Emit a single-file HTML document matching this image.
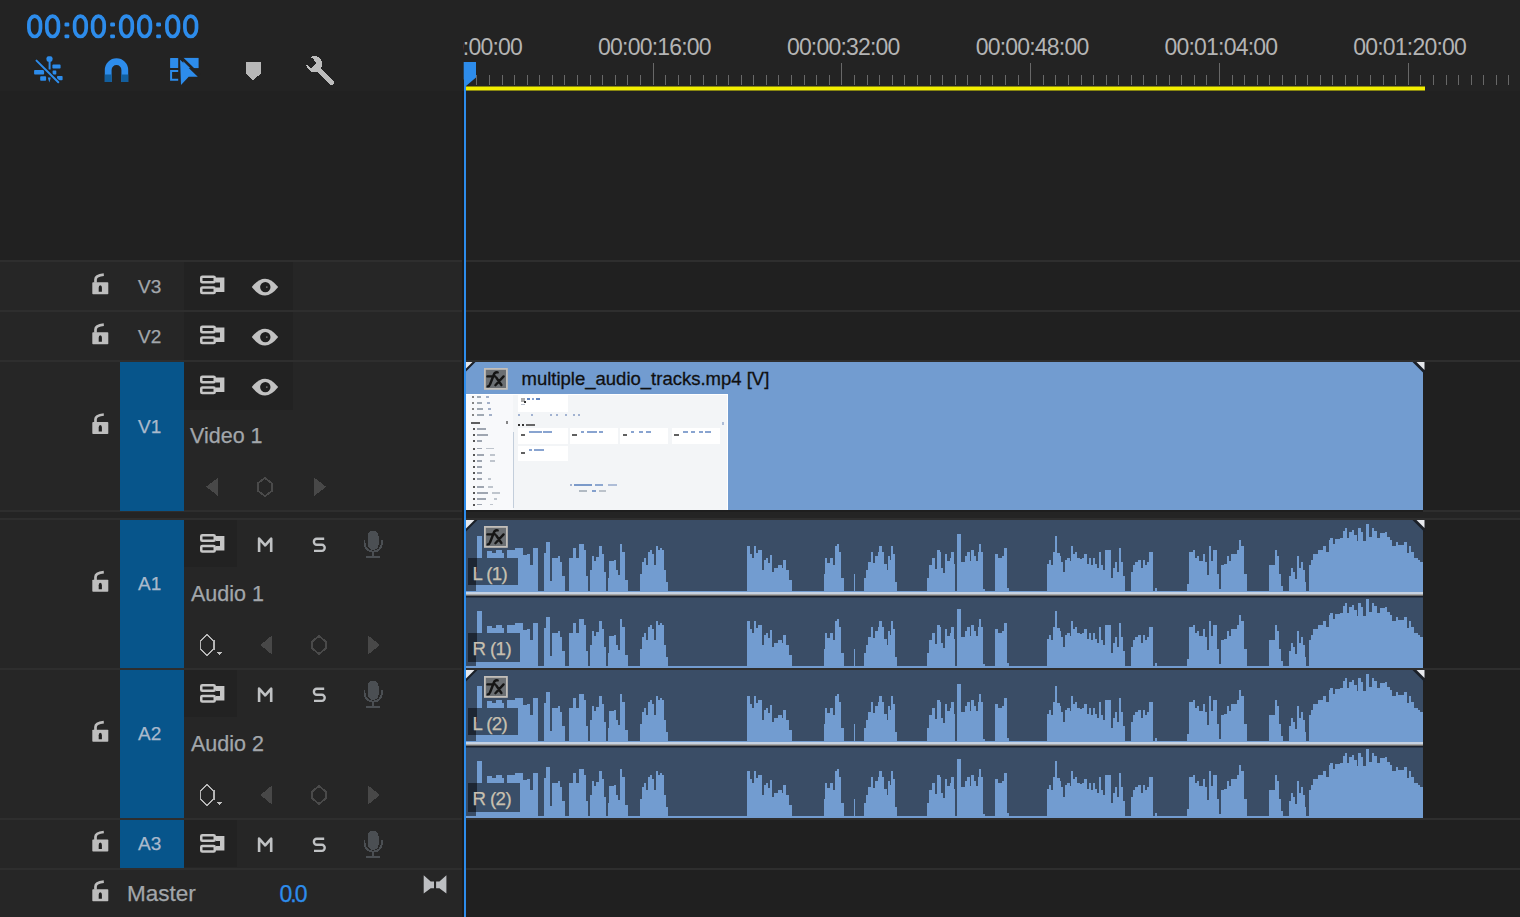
<!DOCTYPE html>
<html><head><meta charset="utf-8"><style>
html,body{margin:0;padding:0;}
body{width:1520px;height:917px;overflow:hidden;position:relative;background:#212121;font-family:"Liberation Sans", sans-serif;}
svg{position:absolute;left:0;top:0;}
</style></head><body>
<svg width="1520" height="917" viewBox="0 0 1520 917" shape-rendering="crispEdges">
<rect x="0" y="0" width="1520" height="91" fill="#232323" />
<rect x="0" y="91" width="1520" height="826" fill="#212121" />
<rect x="0" y="262" width="462" height="49" fill="#262626" />
<rect x="466" y="262" width="1054" height="49" fill="#202020" />
<rect x="0" y="312" width="462" height="49" fill="#262626" />
<rect x="466" y="312" width="1054" height="49" fill="#202020" />
<rect x="0" y="362" width="462" height="149" fill="#262626" />
<rect x="466" y="362" width="1054" height="149" fill="#202020" />
<rect x="0" y="520" width="462" height="148" fill="#262626" />
<rect x="466" y="520" width="1054" height="148" fill="#202020" />
<rect x="0" y="670" width="462" height="148" fill="#262626" />
<rect x="466" y="670" width="1054" height="148" fill="#202020" />
<rect x="0" y="820" width="462" height="48" fill="#262626" />
<rect x="466" y="820" width="1054" height="48" fill="#202020" />
<rect x="0" y="870" width="462" height="48" fill="#262626" />
<rect x="466" y="870" width="1054" height="48" fill="#202020" />
<rect x="0" y="260" width="1520" height="2" fill="#2e2e2e" />
<rect x="0" y="310" width="1520" height="2" fill="#2e2e2e" />
<rect x="0" y="360" width="1520" height="2" fill="#2e2e2e" />
<rect x="0" y="510" width="1520" height="2" fill="#2e2e2e" />
<rect x="0" y="518" width="1520" height="2" fill="#2e2e2e" />
<rect x="0" y="668" width="1520" height="2" fill="#2e2e2e" />
<rect x="0" y="818" width="1520" height="2" fill="#2e2e2e" />
<rect x="0" y="868" width="1520" height="2" fill="#2e2e2e" />
<rect x="0" y="512" width="1520" height="6" fill="#242424" />
<rect x="462" y="91" width="2" height="826" fill="#1c1c1c" />
<rect x="120" y="362" width="64" height="149" fill="#07558b" />
<rect x="120" y="520" width="64" height="148" fill="#07558b" />
<rect x="120" y="670" width="64" height="148" fill="#07558b" />
<rect x="120" y="820" width="64" height="48" fill="#07558b" />
<rect x="184" y="262" width="109" height="48" fill="#222222" />
<rect x="184" y="312" width="109" height="48" fill="#222222" />
<rect x="184" y="362" width="109" height="48" fill="#222222" />
<rect x="184" y="520" width="53" height="47" fill="#222222" />
<rect x="184" y="670" width="53" height="47" fill="#222222" />
<rect x="184" y="820" width="53" height="47" fill="#222222" />
<g fill="none" stroke="#2d8ceb" stroke-width="3.7" shape-rendering="geometricPrecision"><rect x="28.900000000000002" y="16.1" width="11.6" height="20.4" rx="5.8" ry="8.2"/><rect x="46.800000000000004" y="16.1" width="11.6" height="20.4" rx="5.8" ry="8.2"/><rect x="74.60000000000001" y="16.1" width="11.6" height="20.4" rx="5.8" ry="8.2"/><rect x="92.60000000000001" y="16.1" width="11.6" height="20.4" rx="5.8" ry="8.2"/><rect x="120.7" y="16.1" width="11.6" height="20.4" rx="5.8" ry="8.2"/><rect x="138.79999999999998" y="16.1" width="11.6" height="20.4" rx="5.8" ry="8.2"/><rect x="166.89999999999998" y="16.1" width="11.6" height="20.4" rx="5.8" ry="8.2"/><rect x="184.89999999999998" y="16.1" width="11.6" height="20.4" rx="5.8" ry="8.2"/></g><g fill="#2d8ceb" shape-rendering="geometricPrecision"><rect x="64.5" y="22.6" width="4.8" height="3.9" rx="1.2"/><rect x="64.5" y="34.4" width="4.8" height="3.9" rx="1.2"/><rect x="110.19999999999999" y="22.6" width="4.8" height="3.9" rx="1.2"/><rect x="110.19999999999999" y="34.4" width="4.8" height="3.9" rx="1.2"/><rect x="156.2" y="22.6" width="4.8" height="3.9" rx="1.2"/><rect x="156.2" y="34.4" width="4.8" height="3.9" rx="1.2"/></g>
<path d="M464.5 63V85M476.5 75V85M489.5 75V85M502.5 75V85M514.5 75V85M527.5 75V85M539.5 75V85M552.5 75V85M564.5 75V85M577.5 75V85M590.5 75V85M602.5 75V85M615.5 75V85M627.5 75V85M640.5 75V85M653.5 63V85M665.5 75V85M678.5 75V85M690.5 75V85M703.5 75V85M716.5 75V85M728.5 75V85M741.5 75V85M753.5 75V85M766.5 75V85M778.5 75V85M791.5 75V85M804.5 75V85M816.5 75V85M829.5 75V85M841.5 63V85M854.5 75V85M867.5 75V85M879.5 75V85M892.5 75V85M904.5 75V85M917.5 75V85M930.5 75V85M942.5 75V85M955.5 75V85M967.5 75V85M980.5 75V85M992.5 75V85M1005.5 75V85M1018.5 75V85M1030.5 63V85M1043.5 75V85M1055.5 75V85M1068.5 75V85M1081.5 75V85M1093.5 75V85M1106.5 75V85M1118.5 75V85M1131.5 75V85M1143.5 75V85M1156.5 75V85M1169.5 75V85M1181.5 75V85M1194.5 75V85M1206.5 75V85M1219.5 63V85M1232.5 75V85M1244.5 75V85M1257.5 75V85M1269.5 75V85M1282.5 75V85M1295.5 75V85M1307.5 75V85M1320.5 75V85M1332.5 75V85M1345.5 75V85M1357.5 75V85M1370.5 75V85M1383.5 75V85M1395.5 75V85M1408.5 63V85M1420.5 75V85M1433.5 75V85M1446.5 75V85M1458.5 75V85M1471.5 75V85M1483.5 75V85M1496.5 75V85M1508.5 75V85" stroke="#686868" stroke-width="1" fill="none"/>
<rect x="466" y="86.5" width="959" height="4" fill="#f2ee00" shape-rendering="geometricPrecision"/>
<path d="M463.7 62H476V77.5L466 86V80L463.7 79.5Z" fill="#2d8ceb" shape-rendering="geometricPrecision"/>
<rect x="464" y="62" width="2" height="855" fill="#2d8ceb" />
<g shape-rendering="geometricPrecision">
<g fill="#2d8ceb">
 <rect x="46.5" y="56.3" width="6" height="5.4" rx="2"/>
 <rect x="48.6" y="60" width="2" height="9.5"/>
 <path d="M47.8 77.5H50.8L49.3 82.4Z"/>
 <rect x="52.4" y="64.6" width="8.2" height="3.9" rx="0.8"/>
 <rect x="34.1" y="70" width="10" height="4.6" rx="0.8"/>
 <rect x="52.6" y="70.5" width="3.7" height="3.9" rx="0.6"/>
 <rect x="40.2" y="76.3" width="5.9" height="4.4" rx="0.8"/>
 <rect x="57" y="76" width="5.6" height="4.3" rx="0.8"/>
</g>
<path d="M35.5 59.6L59.3 83.2" stroke="#232323" stroke-width="4"/>
<path d="M36.5 60.6L58.3 82.2" stroke="#2d8ceb" stroke-width="2" stroke-linecap="round"/>
<path d="M108.2 82V70A8.3 8.3 0 0 1 124.8 70V82" stroke="#2d8ceb" stroke-width="6.8" fill="none"/>
<path d="M108.2 82V74.5M124.8 82V74.5" stroke="#125f9f" stroke-width="6.8" fill="none"/>
<g fill="#2d8ceb">
 <rect x="170.1" y="57.9" width="8.1" height="10.2" rx="0.6"/>
 <path d="M170.1 70H178.2V72H172.1V78.7H178.2V80.7H170.1Z"/>
 <path d="M183.3 57.9H198.6V68.1H183.3Z"/>
</g>
<path d="M181 57.2L199.5 75.3" stroke="#232323" stroke-width="2.6"/>
<path d="M180.1 59.8L181 85L188.7 76.7H197.8Z" fill="#2d8ceb"/>
</g>
<path d="M246 62.2H260.5V73.7L253.2 80.4L246 73.7Z" fill="#b8b8b8"/>
<g fill="#bdbdbd">
<path d="M318 69L331.5 82.5" stroke="#bdbdbd" stroke-width="5" stroke-linecap="round"/>
<path d="M310.4 57 A8 8 0 1 1 306.2 64.4 L311 68 L316 63 L313 58.5Z"/>
</g>
<g shape-rendering="geometricPrecision"><rect x="92.3" y="282.25" width="16" height="12" rx="0.8" fill="#bdbdbd"/>
<path d="M95.5 282.75V279.45Q95.5 275.45 103.8 274.65" stroke="#bdbdbd" stroke-width="2.7" fill="none"/>
<path d="M98.7 287.75Q98.7 285.25 100.3 285.25Q101.89999999999999 285.25 101.89999999999999 287.75V291.75H98.7Z" fill="#1e1e1e"/></g>
<g shape-rendering="geometricPrecision"><g fill="none" stroke="#c6c6c6" stroke-width="2.5">
<rect x="201.25" y="276.75" width="13.5" height="5.6" rx="1.1"/>
<rect x="201.25" y="287.45" width="13.5" height="5.6" rx="1.1"/>
</g><path d="M216 277.5H224.4V292.0H216V287.4H220V282.4H216Z" fill="#c6c6c6"/></g>
<g shape-rendering="geometricPrecision"><path d="M251.8 287.1Q265 270.3 278.2 287.1Q265 303.90000000000003 251.8 287.1Z" fill="#c2c2c2"/>
<circle cx="265.3" cy="287.1" r="5.2" fill="#1f1f1f"/><circle cx="266.8" cy="287.1" r="0.9" fill="#777"/></g>
<g shape-rendering="geometricPrecision"><rect x="92.3" y="332.25" width="16" height="12" rx="0.8" fill="#bdbdbd"/>
<path d="M95.5 332.75V329.45Q95.5 325.45 103.8 324.65" stroke="#bdbdbd" stroke-width="2.7" fill="none"/>
<path d="M98.7 337.75Q98.7 335.25 100.3 335.25Q101.89999999999999 335.25 101.89999999999999 337.75V341.75H98.7Z" fill="#1e1e1e"/></g>
<g shape-rendering="geometricPrecision"><g fill="none" stroke="#c6c6c6" stroke-width="2.5">
<rect x="201.25" y="326.75" width="13.5" height="5.6" rx="1.1"/>
<rect x="201.25" y="337.45" width="13.5" height="5.6" rx="1.1"/>
</g><path d="M216 327.5H224.4V342.0H216V337.4H220V332.4H216Z" fill="#c6c6c6"/></g>
<g shape-rendering="geometricPrecision"><path d="M251.8 337.1Q265 320.3 278.2 337.1Q265 353.90000000000003 251.8 337.1Z" fill="#c2c2c2"/>
<circle cx="265.3" cy="337.1" r="5.2" fill="#1f1f1f"/><circle cx="266.8" cy="337.1" r="0.9" fill="#777"/></g>
<g shape-rendering="geometricPrecision"><rect x="92.3" y="422.1" width="16" height="12" rx="0.8" fill="#bdbdbd"/>
<path d="M95.5 422.6V419.3Q95.5 415.3 103.8 414.5" stroke="#bdbdbd" stroke-width="2.7" fill="none"/>
<path d="M98.7 427.6Q98.7 425.1 100.3 425.1Q101.89999999999999 425.1 101.89999999999999 427.6V431.6H98.7Z" fill="#1e1e1e"/></g>
<g shape-rendering="geometricPrecision"><g fill="none" stroke="#c6c6c6" stroke-width="2.5">
<rect x="201.25" y="376.75" width="13.5" height="5.6" rx="1.1"/>
<rect x="201.25" y="387.45" width="13.5" height="5.6" rx="1.1"/>
</g><path d="M216 377.5H224.4V392.0H216V387.4H220V382.4H216Z" fill="#c6c6c6"/></g>
<g shape-rendering="geometricPrecision"><path d="M251.8 387.1Q265 370.3 278.2 387.1Q265 403.90000000000003 251.8 387.1Z" fill="#c2c2c2"/>
<circle cx="265.3" cy="387.1" r="5.2" fill="#1f1f1f"/><circle cx="266.8" cy="387.1" r="0.9" fill="#777"/></g>
<path d="M218.4 477.4V496.2L206 486.8Z" fill="#484848"/>
<path d="M265 478.0L272.25 483.46V490.74000000000007L265 496.20000000000005L257.75 490.74000000000007V483.46Z" stroke="#4a4a4a" stroke-width="1.8" fill="none"/>
<path d="M313.9 477.4V496.2L326.2 486.8Z" fill="#484848"/>
<g shape-rendering="geometricPrecision"><rect x="92.3" y="579.75" width="16" height="12" rx="0.8" fill="#bdbdbd"/>
<path d="M95.5 580.25V576.95Q95.5 572.95 103.8 572.15" stroke="#bdbdbd" stroke-width="2.7" fill="none"/>
<path d="M98.7 585.25Q98.7 582.75 100.3 582.75Q101.89999999999999 582.75 101.89999999999999 585.25V589.25H98.7Z" fill="#1e1e1e"/></g>
<g shape-rendering="geometricPrecision"><g fill="none" stroke="#c6c6c6" stroke-width="2.5">
<rect x="201.25" y="535.25" width="13.5" height="5.6" rx="1.1"/>
<rect x="201.25" y="545.95" width="13.5" height="5.6" rx="1.1"/>
</g><path d="M216 536H224.4V550.5H216V545.9H220V540.9H216Z" fill="#c6c6c6"/></g>
<path d="M259.09999999999997 552.0V538.6L265.2 545.3L271.2 538.6V552.0" stroke="#bfc1c3" stroke-width="2.6" stroke-linejoin="round" fill="none" shape-rendering="geometricPrecision"/>
<path d="M324.20000000000005 538.6999999999999H316.70000000000005A2.35 2.55 0 0 0 316.70000000000005 544.8H321.90000000000003A2.35 2.55 0 0 1 321.90000000000003 550.9H314.0" stroke="#c0c2c4" stroke-width="2.4" fill="none" shape-rendering="geometricPrecision"/>
<g><rect x="367.90000000000003" y="530.5" width="10.6" height="19.4" rx="5.3" fill="#4b4f53"/>
<path d="M364.5 539.5V543.0A8.7 8.7 0 0 0 381.90000000000003 543.0V539.5M373.2 552.0V556.5M366.3 557.0H380.1" stroke="#4b4f53" stroke-width="1.9" fill="none"/></g>
<path d="M207.1 634.5L213.7 640.8V649.2L207.1 655.5L200.5 649.2V640.8Z" stroke="#b6b6b6" stroke-width="1.6" fill="none"/><path d="M216.3 652H222.6L219.45 655.5Z" fill="#c0c0c0"/><path d="M272.2 635.1V654.9L260.4 645Z" fill="#484848"/><path d="M319 636.1L325.75 641.44V648.56L319 653.9L312.25 648.56V641.44Z" stroke="#4a4a4a" stroke-width="1.8" fill="none"/><path d="M367.6 635.1V654.9L380.1 645Z" fill="#484848"/>
<g shape-rendering="geometricPrecision"><rect x="92.3" y="729.75" width="16" height="12" rx="0.8" fill="#bdbdbd"/>
<path d="M95.5 730.25V726.95Q95.5 722.95 103.8 722.15" stroke="#bdbdbd" stroke-width="2.7" fill="none"/>
<path d="M98.7 735.25Q98.7 732.75 100.3 732.75Q101.89999999999999 732.75 101.89999999999999 735.25V739.25H98.7Z" fill="#1e1e1e"/></g>
<g shape-rendering="geometricPrecision"><g fill="none" stroke="#c6c6c6" stroke-width="2.5">
<rect x="201.25" y="685.25" width="13.5" height="5.6" rx="1.1"/>
<rect x="201.25" y="695.95" width="13.5" height="5.6" rx="1.1"/>
</g><path d="M216 686H224.4V700.5H216V695.9H220V690.9H216Z" fill="#c6c6c6"/></g>
<path d="M259.09999999999997 702.0V688.6L265.2 695.3L271.2 688.6V702.0" stroke="#bfc1c3" stroke-width="2.6" stroke-linejoin="round" fill="none" shape-rendering="geometricPrecision"/>
<path d="M324.20000000000005 688.6999999999999H316.70000000000005A2.35 2.55 0 0 0 316.70000000000005 694.8H321.90000000000003A2.35 2.55 0 0 1 321.90000000000003 700.9H314.0" stroke="#c0c2c4" stroke-width="2.4" fill="none" shape-rendering="geometricPrecision"/>
<g><rect x="367.90000000000003" y="680.5" width="10.6" height="19.4" rx="5.3" fill="#4b4f53"/>
<path d="M364.5 689.5V693.0A8.7 8.7 0 0 0 381.90000000000003 693.0V689.5M373.2 702.0V706.5M366.3 707.0H380.1" stroke="#4b4f53" stroke-width="1.9" fill="none"/></g>
<path d="M207.1 784.5L213.7 790.8V799.2L207.1 805.5L200.5 799.2V790.8Z" stroke="#b6b6b6" stroke-width="1.6" fill="none"/><path d="M216.3 802H222.6L219.45 805.5Z" fill="#c0c0c0"/><path d="M272.2 785.1V804.9L260.4 795Z" fill="#484848"/><path d="M319 786.1L325.75 791.44V798.56L319 803.9L312.25 798.56V791.44Z" stroke="#4a4a4a" stroke-width="1.8" fill="none"/><path d="M367.6 785.1V804.9L380.1 795Z" fill="#484848"/>
<g shape-rendering="geometricPrecision"><rect x="92.3" y="839.6" width="16" height="12" rx="0.8" fill="#bdbdbd"/>
<path d="M95.5 840.1V836.8000000000001Q95.5 832.8000000000001 103.8 832.0" stroke="#bdbdbd" stroke-width="2.7" fill="none"/>
<path d="M98.7 845.1Q98.7 842.6 100.3 842.6Q101.89999999999999 842.6 101.89999999999999 845.1V849.1H98.7Z" fill="#1e1e1e"/></g>
<g shape-rendering="geometricPrecision"><g fill="none" stroke="#c6c6c6" stroke-width="2.5">
<rect x="201.25" y="835.25" width="13.5" height="5.6" rx="1.1"/>
<rect x="201.25" y="845.95" width="13.5" height="5.6" rx="1.1"/>
</g><path d="M216 836H224.4V850.5H216V845.9H220V840.9H216Z" fill="#c6c6c6"/></g>
<path d="M259.09999999999997 852.0V838.6L265.2 845.3L271.2 838.6V852.0" stroke="#bfc1c3" stroke-width="2.6" stroke-linejoin="round" fill="none" shape-rendering="geometricPrecision"/>
<path d="M324.20000000000005 838.6999999999999H316.70000000000005A2.35 2.55 0 0 0 316.70000000000005 844.8H321.90000000000003A2.35 2.55 0 0 1 321.90000000000003 850.9H314.0" stroke="#c0c2c4" stroke-width="2.4" fill="none" shape-rendering="geometricPrecision"/>
<g><rect x="367.90000000000003" y="830.5" width="10.6" height="19.4" rx="5.3" fill="#4b4f53"/>
<path d="M364.5 839.5V843.0A8.7 8.7 0 0 0 381.90000000000003 843.0V839.5M373.2 852.0V856.5M366.3 857.0H380.1" stroke="#4b4f53" stroke-width="1.9" fill="none"/></g>
<g shape-rendering="geometricPrecision"><rect x="92.3" y="889.3" width="16" height="12" rx="0.8" fill="#bdbdbd"/>
<path d="M95.5 889.8V886.5Q95.5 882.5 103.8 881.6999999999999" stroke="#bdbdbd" stroke-width="2.7" fill="none"/>
<path d="M98.7 894.8Q98.7 892.3 100.3 892.3Q101.89999999999999 892.3 101.89999999999999 894.8V898.8H98.7Z" fill="#1e1e1e"/></g>
<path d="M423.7 875.3L430.7 881.4H434V888.2H430.7L423.7 893.4ZM446.4 875.3L439.4 881.4H436.1V888.2H439.4L446.4 893.4Z" fill="#bdbfc2" shape-rendering="geometricPrecision"/>
<rect x="466" y="362" width="957" height="148" fill="#729cd0"/><rect x="466" y="510" width="957" height="2" fill="#1e1e1e"/>
<rect x="466" y="394" width="261.7" height="115.5" fill="#f3f5f7"/>
<rect x="466" y="394" width="47" height="115.5" fill="#f8f9fb"/><rect x="512.6" y="432" width="1.2" height="76" fill="#c3cedb"/>
<rect x="466" y="394" width="261.7" height="1" fill="#ffffff"/><rect x="726.7" y="394" width="1" height="115.5" fill="#ffffff"/>
<rect x="518" y="395.3" width="49.5" height="16.2" fill="#ffffff"/>
<rect x="518" y="428.2" width="49.5" height="15.4" fill="#ffffff"/>
<rect x="569.7" y="428.2" width="48" height="15.4" fill="#ffffff"/>
<rect x="620" y="428.2" width="47.6" height="15.4" fill="#ffffff"/>
<rect x="671.5" y="428.2" width="48" height="15.4" fill="#ffffff"/>
<rect x="518" y="446" width="49.5" height="15.4" fill="#ffffff"/>
<rect x="472" y="395.9" width="2" height="1.8" fill="#666" fill-opacity="0.8"/>
<rect x="476.5" y="395.9" width="4" height="1.6" fill="#7b8794" fill-opacity="0.7"/>
<rect x="486" y="395.9" width="2.5" height="1.6" fill="#6a7fa6" fill-opacity="0.6"/>
<rect x="472" y="402.09999999999997" width="2" height="1.8" fill="#666" fill-opacity="0.8"/>
<rect x="476.5" y="402.09999999999997" width="5" height="1.6" fill="#7b8794" fill-opacity="0.7"/>
<rect x="487" y="402.09999999999997" width="2.5" height="1.6" fill="#6a7fa6" fill-opacity="0.6"/>
<rect x="472" y="408.2" width="2" height="1.8" fill="#666" fill-opacity="0.8"/>
<rect x="476.5" y="408.2" width="6" height="1.6" fill="#7b8794" fill-opacity="0.7"/>
<rect x="488" y="408.2" width="2.5" height="1.6" fill="#6a7fa6" fill-opacity="0.6"/>
<rect x="472" y="414.09999999999997" width="2" height="1.8" fill="#666" fill-opacity="0.8"/>
<rect x="476.5" y="414.09999999999997" width="7" height="1.6" fill="#7b8794" fill-opacity="0.7"/>
<rect x="489" y="414.09999999999997" width="2.5" height="1.6" fill="#6a7fa6" fill-opacity="0.6"/>
<rect x="471" y="421.70000000000005" width="9" height="2" fill="#444" fill-opacity="0.85"/>
<circle cx="507" cy="422.6" r="1.4" fill="#555" fill-opacity="0.7"/>
<rect x="472.5" y="428.0" width="2" height="2" fill="#3a3a3a" fill-opacity="0.85"/>
<rect x="477" y="428.09999999999997" width="9" height="1.6" fill="#6f7a88" fill-opacity="0.65"/>
<rect x="472.5" y="434.1" width="2" height="2" fill="#3a3a3a" fill-opacity="0.85"/>
<rect x="477" y="434.2" width="11" height="1.6" fill="#6f7a88" fill-opacity="0.65"/>
<rect x="472.5" y="440.1" width="2" height="2" fill="#3a3a3a" fill-opacity="0.85"/>
<rect x="477" y="440.2" width="5" height="1.6" fill="#6f7a88" fill-opacity="0.65"/>
<rect x="472.5" y="447.6" width="2" height="2" fill="#3a3a3a" fill-opacity="0.85"/>
<rect x="477" y="447.7" width="5" height="1.6" fill="#6f7a88" fill-opacity="0.65"/>
<rect x="486" y="447.7" width="8" height="1.6" fill="#8692a0" fill-opacity="0.5"/>
<rect x="472.5" y="453.90000000000003" width="2" height="2" fill="#3a3a3a" fill-opacity="0.85"/>
<rect x="477" y="454.0" width="7" height="1.6" fill="#6f7a88" fill-opacity="0.65"/>
<rect x="490" y="454.0" width="5" height="1.6" fill="#8692a0" fill-opacity="0.5"/>
<rect x="472.5" y="459.90000000000003" width="2" height="2" fill="#3a3a3a" fill-opacity="0.85"/>
<rect x="477" y="460.0" width="5" height="1.6" fill="#6f7a88" fill-opacity="0.65"/>
<rect x="490" y="460.0" width="5" height="1.6" fill="#8692a0" fill-opacity="0.5"/>
<rect x="472.5" y="465.90000000000003" width="2" height="2" fill="#3a3a3a" fill-opacity="0.85"/>
<rect x="477" y="466.0" width="5" height="1.6" fill="#6f7a88" fill-opacity="0.65"/>
<rect x="472.5" y="471.90000000000003" width="2" height="2" fill="#3a3a3a" fill-opacity="0.85"/>
<rect x="477" y="472.0" width="5" height="1.6" fill="#6f7a88" fill-opacity="0.65"/>
<rect x="472.5" y="478.0" width="2" height="2" fill="#3a3a3a" fill-opacity="0.85"/>
<rect x="477" y="478.09999999999997" width="5" height="1.6" fill="#6f7a88" fill-opacity="0.65"/>
<rect x="488" y="478.09999999999997" width="3" height="1.6" fill="#8692a0" fill-opacity="0.5"/>
<rect x="472.5" y="485.8" width="2" height="2" fill="#3a3a3a" fill-opacity="0.85"/>
<rect x="477" y="485.9" width="7" height="1.6" fill="#6f7a88" fill-opacity="0.65"/>
<rect x="488" y="485.9" width="5" height="1.6" fill="#8692a0" fill-opacity="0.5"/>
<rect x="472.5" y="491.8" width="2" height="2" fill="#3a3a3a" fill-opacity="0.85"/>
<rect x="477" y="491.9" width="11" height="1.6" fill="#6f7a88" fill-opacity="0.65"/>
<rect x="492" y="491.9" width="8" height="1.6" fill="#8692a0" fill-opacity="0.5"/>
<rect x="472.5" y="497.8" width="2" height="2" fill="#3a3a3a" fill-opacity="0.85"/>
<rect x="477" y="497.9" width="9" height="1.6" fill="#6f7a88" fill-opacity="0.65"/>
<rect x="494" y="497.9" width="3" height="1.6" fill="#8692a0" fill-opacity="0.5"/>
<rect x="472.5" y="503.5" width="2" height="2" fill="#3a3a3a" fill-opacity="0.85"/>
<rect x="477" y="503.59999999999997" width="5" height="1.6" fill="#6f7a88" fill-opacity="0.65"/>
<rect x="490" y="503.59999999999997" width="3" height="1.6" fill="#8692a0" fill-opacity="0.5"/>
<rect x="521" y="397.5" width="4" height="4" fill="#777" fill-opacity="0.6"/><rect x="524" y="400.5" width="2" height="2" fill="#333"/>
<rect x="527" y="398" width="3" height="1.6" fill="#3b68b0" fill-opacity="0.8"/><rect x="532" y="398" width="2" height="1.6" fill="#3b68b0" fill-opacity="0.6"/><rect x="536" y="398" width="4" height="1.6" fill="#3b68b0" fill-opacity="0.8"/>
<rect x="521" y="404" width="4" height="1.4" fill="#8a96a8" fill-opacity="0.6"/>
<rect x="518" y="414" width="1.8" height="1.8" fill="#6a86b8" fill-opacity="0.6"/>
<rect x="531" y="414" width="1.8" height="1.8" fill="#6a86b8" fill-opacity="0.6"/>
<rect x="550" y="414" width="1.8" height="1.8" fill="#6a86b8" fill-opacity="0.6"/>
<rect x="556" y="414" width="1.8" height="1.8" fill="#6a86b8" fill-opacity="0.6"/>
<rect x="565" y="414" width="1.8" height="1.8" fill="#6a86b8" fill-opacity="0.6"/>
<rect x="573" y="414" width="1.8" height="1.8" fill="#6a86b8" fill-opacity="0.6"/>
<rect x="578" y="414" width="1.8" height="1.8" fill="#6a86b8" fill-opacity="0.6"/>
<rect x="518" y="423.8" width="2" height="2" fill="#333"/><rect x="522" y="423.8" width="2" height="2" fill="#333"/><rect x="526" y="423.8" width="9" height="1.8" fill="#444" fill-opacity="0.8"/>
<rect x="722" y="421.5" width="2" height="3" fill="#6a86b8" fill-opacity="0.5"/>
<rect x="520.5" y="434.0" width="4.5" height="2.2" fill="#3a3a3a" fill-opacity="0.8"/>
<rect x="529" y="431.4" width="13" height="1.5" fill="#3b68b0" fill-opacity="0.6"/>
<rect x="543" y="431.4" width="9" height="1.5" fill="#3b68b0" fill-opacity="0.6"/>
<rect x="572.2" y="434.0" width="4.5" height="2.2" fill="#3a3a3a" fill-opacity="0.8"/>
<rect x="580.7" y="431.4" width="3" height="1.5" fill="#3b68b0" fill-opacity="0.6"/>
<rect x="586.7" y="431.4" width="10" height="1.5" fill="#3b68b0" fill-opacity="0.6"/>
<rect x="598.7" y="431.4" width="4" height="1.5" fill="#3b68b0" fill-opacity="0.6"/>
<rect x="622.5" y="434.0" width="4.5" height="2.2" fill="#3a3a3a" fill-opacity="0.8"/>
<rect x="631" y="431.4" width="3" height="1.5" fill="#3b68b0" fill-opacity="0.6"/>
<rect x="639" y="431.4" width="4" height="1.5" fill="#3b68b0" fill-opacity="0.6"/>
<rect x="646" y="431.4" width="5" height="1.5" fill="#3b68b0" fill-opacity="0.6"/>
<rect x="674.0" y="434.0" width="4.5" height="2.2" fill="#3a3a3a" fill-opacity="0.8"/>
<rect x="682.5" y="431.4" width="5" height="1.5" fill="#3b68b0" fill-opacity="0.6"/>
<rect x="690.5" y="431.4" width="4" height="1.5" fill="#3b68b0" fill-opacity="0.6"/>
<rect x="698.5" y="431.4" width="4" height="1.5" fill="#3b68b0" fill-opacity="0.6"/>
<rect x="704.5" y="431.4" width="6" height="1.5" fill="#3b68b0" fill-opacity="0.6"/>
<rect x="520.5" y="451.8" width="4.5" height="2.2" fill="#3a3a3a" fill-opacity="0.8"/>
<rect x="529" y="449.2" width="3" height="1.5" fill="#3b68b0" fill-opacity="0.6"/>
<rect x="534" y="449.2" width="10" height="1.5" fill="#3b68b0" fill-opacity="0.6"/>
<rect x="570" y="484" width="2" height="1.5" fill="#6a86b8" fill-opacity="0.6"/><rect x="574" y="484" width="18" height="1.5" fill="#3b68b0" fill-opacity="0.65"/><rect x="595" y="484" width="8" height="1.5" fill="#3b68b0" fill-opacity="0.55"/><rect x="608" y="484" width="9" height="1.5" fill="#6a86b8" fill-opacity="0.5"/>
<rect x="579" y="490.3" width="8" height="1.5" fill="#8692a0" fill-opacity="0.6"/><rect x="592" y="490.3" width="4" height="1.5" fill="#3b68b0" fill-opacity="0.6"/><rect x="599" y="490.3" width="7" height="1.5" fill="#8692a0" fill-opacity="0.5"/>
<g shape-rendering="geometricPrecision"><path d="M466 362H475.5L466 371.5Z" fill="#1a1f27"/><path d="M466 362H472.5L466 368.5Z" fill="#e6e8ec"/><path d="M1424.5 362H1412.5L1424.5 374Z" fill="#1a1f27"/><path d="M1424.5 362H1416.5L1424.5 370Z" fill="#e6e8ec"/></g>
<g shape-rendering="geometricPrecision"><rect x="484.9" y="368.9" width="22" height="20" fill="#6b6f73" stroke="#c2beb9" stroke-width="1.8"/>
<path d="M497.7 372.4Q494.6 371.8 493.7 375L490.1 384.2Q489.3 386.6 487.8 386.4M487.4 376.4H495.2M495.4 385.2L503.6 376.4M496.4 377.8L501.4 385" stroke="#151515" stroke-width="2.4" stroke-linecap="round" fill="none"/></g>
<rect x="466" y="520" width="957" height="148" fill="#3a4d66"/>
<path d="M466 592L466 591.0L476 591.0L476 572.0L477 572.0L477 535.7L482 535.7L482 558.0L487 558.0L487 551.0L492 551.0L492 553.0L496 553.0L496 550.0L502 550.0L502 553.0L504 553.0L504 557.5L507 557.5L507 549.7L515 549.7L515 548.0L523 548.0L523 555.0L527 555.0L527 554.0L530 554.0L530 565.0L533 565.0L533 548.0L538 548.0L538 591.0L544 591.0L544 553.0L546 553.0L546 541.8L550 541.8L550 581.0L552 581.0L552 557.5L558 557.5L558 556.0L560 556.0L560 562.0L562 562.0L562 576.0L565 576.0L565 591.0L569 591.0L569 557.5L573 557.5L573 548.0L576 548.0L576 558.0L579 558.0L579 543.6L584 543.6L584 550.0L586 550.0L586 576.0L588 576.0L588 591.0L590 591.0L590 569.7L592 569.7L592 555.8L594 555.8L594 561.4L596 561.4L596 556.6L599 556.6L599 545.7L602 545.7L602 553.6L604 553.6L604 571.5L606 571.5L606 591.0L608 591.0L608 577.6L609 577.6L609 561.4L614 561.4L614 559.7L616 559.7L616 570.0L618 570.0L618 575.0L620 575.0L620 543.6L622 543.6L622 552.3L625 552.3L625 579.8L628 579.8L628 591.0L640 591.0L640 573.7L642 573.7L642 562.0L644 562.0L644 557.5L646 557.5L646 565.4L648 565.4L648 551.8L650 551.8L650 549.7L652 549.7L652 553.6L654 553.6L654 565.4L656 565.4L656 545.7L658 545.7L658 549.7L660 549.7L660 547.5L662 547.5L662 550.0L664 550.0L664 569.7L666 569.7L666 582.0L668 582.0L668 591.0L747 591.0L747 545.7L750 545.7L750 554.0L752 554.0L752 557.5L754 557.5L754 545.7L756 545.7L756 553.0L758 553.0L758 550.0L762 550.0L762 569.7L764 569.7L764 559.7L766 559.7L766 557.5L768 557.5L768 562.8L770 562.8L770 555.3L772 555.3L772 571.5L774 571.5L774 567.6L778 567.6L778 564.5L782 564.5L782 567.6L783 567.6L783 559.7L786 559.7L786 569.7L789 569.7L789 579.8L792 579.8L792 591.0L824 591.0L824 574.0L825 574.0L825 558.0L827 558.0L827 563.0L830 563.0L830 558.4L833 558.4L833 565.4L835 565.4L835 546.0L837 546.0L837 543.6L839 543.6L839 551.8L841 551.8L841 577.6L844 577.6L844 591.0L854 591.0L854 574.0L855 574.0L855 591.0L864 591.0L864 578.0L866 578.0L866 570.2L868 570.2L868 562.0L871 562.0L871 551.8L873 551.8L873 563.0L875 563.0L875 555.8L878 555.8L878 551.8L879 551.8L879 545.7L882 545.7L882 552.3L884 552.3L884 564.0L887 564.0L887 569.7L888 569.7L888 555.8L890 555.8L890 559.7L891 559.7L891 545.7L893 545.7L893 554.0L895 554.0L895 582.0L897 582.0L897 591.0L927 591.0L927 578.0L929 578.0L929 564.5L932 564.5L932 558.0L935 558.0L935 569.3L937 569.3L937 549.7L940 549.7L940 551.8L941 551.8L941 567.6L943 567.6L943 573.2L945 573.2L945 553.6L947 553.6L947 561.4L950 561.4L950 558.0L951 558.0L951 551.8L954 551.8L954 563.6L955 563.6L955 591.0L957 591.0L957 533.5L961 533.5L961 562.0L965 562.0L965 555.8L967 555.8L967 551.8L970 551.8L970 561.4L971 561.4L971 549.7L974 549.7L974 555.8L976 555.8L976 561.4L978 561.4L978 551.8L979 551.8L979 543.6L981 543.6L981 551.8L983 551.8L983 589.0L985 589.0L985 591.0L995 591.0L995 553.6L998 553.6L998 557.5L1002 557.5L1002 555.8L1004 555.8L1004 548.0L1007 548.0L1007 588.0L1009 588.0L1009 591.0L1047 591.0L1047 564.0L1049 564.0L1049 559.7L1051 559.7L1051 565.4L1053 565.4L1053 551.8L1055 551.8L1055 535.7L1057 535.7L1057 553.0L1060 553.0L1060 555.8L1061 555.8L1061 562.0L1063 562.0L1063 571.5L1065 571.5L1065 559.7L1067 559.7L1067 558.0L1070 558.0L1070 561.4L1071 561.4L1071 545.7L1073 545.7L1073 553.6L1075 553.6L1075 551.8L1077 551.8L1077 558.0L1080 558.0L1080 559.3L1082 559.3L1082 557.5L1084 557.5L1084 553.6L1087 553.6L1087 563.6L1089 563.6L1089 558.0L1091 558.0L1091 565.4L1093 565.4L1093 558.0L1095 558.0L1095 563.6L1097 563.6L1097 567.6L1099 567.6L1099 551.8L1101 551.8L1101 565.4L1103 565.4L1103 569.7L1105 569.7L1105 549.7L1111 549.7L1111 577.6L1113 577.6L1113 567.6L1115 567.6L1115 562.0L1117 562.0L1117 571.5L1119 571.5L1119 548.0L1121 548.0L1121 562.0L1123 562.0L1123 575.8L1125 575.8L1125 591.0L1131 591.0L1131 571.5L1133 571.5L1133 565.4L1135 565.4L1135 562.0L1138 562.0L1138 559.7L1141 559.7L1141 567.6L1143 567.6L1143 559.7L1145 559.7L1145 565.4L1147 565.4L1147 562.0L1149 562.0L1149 551.8L1153 551.8L1153 591.0L1155 591.0L1155 587.6L1157 587.6L1157 591.0L1187 591.0L1187 584.0L1189 584.0L1189 551.8L1193 551.8L1193 550.0L1195 550.0L1195 557.5L1197 557.5L1197 555.8L1199 555.8L1199 561.4L1203 561.4L1203 554.0L1205 554.0L1205 562.0L1207 562.0L1207 575.0L1209 575.0L1209 545.7L1211 545.7L1211 561.4L1213 561.4L1213 550.0L1217 550.0L1217 573.7L1219 573.7L1219 589.0L1221 589.0L1221 565.4L1224 565.4L1224 563.6L1227 563.6L1227 555.8L1229 555.8L1229 561.4L1231 561.4L1231 554.0L1233 554.0L1233 553.6L1237 553.6L1237 549.7L1239 549.7L1239 540.0L1241 540.0L1241 545.7L1244 545.7L1244 573.7L1247 573.7L1247 591.0L1269 591.0L1269 565.4L1275 565.4L1275 550.0L1277 550.0L1277 555.8L1279 555.8L1279 573.7L1281 573.7L1281 586.0L1283 586.0L1283 591.0L1289 591.0L1289 575.8L1291 575.8L1291 567.6L1293 567.6L1293 571.5L1295 571.5L1295 579.3L1297 579.3L1297 555.8L1299 555.8L1299 567.6L1301 567.6L1301 562.0L1303 562.0L1303 569.7L1305 569.7L1305 582.0L1306 582.0L1306 591.0L1309 591.0L1309 565.4L1311 565.4L1311 559.7L1313 559.7L1313 553.6L1318 553.6L1318 549.7L1323 549.7L1323 545.7L1326 545.7L1326 551.8L1329 551.8L1329 540.0L1330 540.0L1330 537.9L1333 537.9L1333 543.6L1335 543.6L1335 539.2L1340 539.2L1340 537.5L1343 537.5L1343 531.3L1345 531.3L1345 528.3L1347 528.3L1347 537.5L1349 537.5L1349 532.2L1352 532.2L1352 530.0L1354 530.0L1354 535.3L1357 535.3L1357 541.0L1358 541.0L1358 528.3L1361 528.3L1361 532.2L1363 532.2L1363 541.0L1366 541.0L1366 524.0L1369 524.0L1369 536.6L1372 536.6L1372 528.3L1374 528.3L1374 530.5L1377 530.5L1377 538.3L1380 538.3L1380 533.0L1385 533.0L1385 532.2L1387 532.2L1387 537.0L1390 537.0L1390 540.0L1392 540.0L1392 546.2L1396 546.2L1396 541.8L1398 541.8L1398 545.3L1404 545.3L1404 541.8L1407 541.8L1407 552.7L1409 552.7L1409 545.7L1411 545.7L1411 551.8L1414 551.8L1414 557.5L1418 557.5L1418 559.7L1420 559.7L1420 562.0L1423 562.0L1423 592Z" fill="#729cd0"/>
<rect x="466" y="591" width="957" height="1" fill="#729cd0"/>
<rect x="466" y="592" width="957" height="2" fill="#c6d2e2"/>
<rect x="466" y="594" width="957" height="1" fill="#a9a9a9"/>
<rect x="466" y="595" width="957" height="1" fill="#6e6e6e"/>
<rect x="466" y="596" width="957" height="1" fill="#1b2230"/><rect x="466" y="597" width="957" height="1" fill="#2b384a"/>
<path d="M466 667L466 666.0L476 666.0L476 647.0L477 647.0L477 610.7L482 610.7L482 633.0L487 633.0L487 626.0L492 626.0L492 628.0L496 628.0L496 625.0L502 625.0L502 628.0L504 628.0L504 632.5L507 632.5L507 624.7L515 624.7L515 623.0L523 623.0L523 630.0L527 630.0L527 629.0L530 629.0L530 640.0L533 640.0L533 623.0L538 623.0L538 666.0L544 666.0L544 628.0L546 628.0L546 616.8L550 616.8L550 656.0L552 656.0L552 632.5L558 632.5L558 631.0L560 631.0L560 637.0L562 637.0L562 651.0L565 651.0L565 666.0L569 666.0L569 632.5L573 632.5L573 623.0L576 623.0L576 633.0L579 633.0L579 618.6L584 618.6L584 625.0L586 625.0L586 651.0L588 651.0L588 666.0L590 666.0L590 644.7L592 644.7L592 630.8L594 630.8L594 636.4L596 636.4L596 631.6L599 631.6L599 620.7L602 620.7L602 628.6L604 628.6L604 646.5L606 646.5L606 666.0L608 666.0L608 652.6L609 652.6L609 636.4L614 636.4L614 634.7L616 634.7L616 645.0L618 645.0L618 650.0L620 650.0L620 618.6L622 618.6L622 627.3L625 627.3L625 654.8L628 654.8L628 666.0L640 666.0L640 648.7L642 648.7L642 637.0L644 637.0L644 632.5L646 632.5L646 640.4L648 640.4L648 626.8L650 626.8L650 624.7L652 624.7L652 628.6L654 628.6L654 640.4L656 640.4L656 620.7L658 620.7L658 624.7L660 624.7L660 622.5L662 622.5L662 625.0L664 625.0L664 644.7L666 644.7L666 657.0L668 657.0L668 666.0L747 666.0L747 620.7L750 620.7L750 629.0L752 629.0L752 632.5L754 632.5L754 620.7L756 620.7L756 628.0L758 628.0L758 625.0L762 625.0L762 644.7L764 644.7L764 634.7L766 634.7L766 632.5L768 632.5L768 637.8L770 637.8L770 630.3L772 630.3L772 646.5L774 646.5L774 642.6L778 642.6L778 639.5L782 639.5L782 642.6L783 642.6L783 634.7L786 634.7L786 644.7L789 644.7L789 654.8L792 654.8L792 666.0L824 666.0L824 649.0L825 649.0L825 633.0L827 633.0L827 638.0L830 638.0L830 633.4L833 633.4L833 640.4L835 640.4L835 621.0L837 621.0L837 618.6L839 618.6L839 626.8L841 626.8L841 652.6L844 652.6L844 666.0L854 666.0L854 649.0L855 649.0L855 666.0L864 666.0L864 653.0L866 653.0L866 645.2L868 645.2L868 637.0L871 637.0L871 626.8L873 626.8L873 638.0L875 638.0L875 630.8L878 630.8L878 626.8L879 626.8L879 620.7L882 620.7L882 627.3L884 627.3L884 639.0L887 639.0L887 644.7L888 644.7L888 630.8L890 630.8L890 634.7L891 634.7L891 620.7L893 620.7L893 629.0L895 629.0L895 657.0L897 657.0L897 666.0L927 666.0L927 653.0L929 653.0L929 639.5L932 639.5L932 633.0L935 633.0L935 644.3L937 644.3L937 624.7L940 624.7L940 626.8L941 626.8L941 642.6L943 642.6L943 648.2L945 648.2L945 628.6L947 628.6L947 636.4L950 636.4L950 633.0L951 633.0L951 626.8L954 626.8L954 638.6L955 638.6L955 666.0L957 666.0L957 608.5L961 608.5L961 637.0L965 637.0L965 630.8L967 630.8L967 626.8L970 626.8L970 636.4L971 636.4L971 624.7L974 624.7L974 630.8L976 630.8L976 636.4L978 636.4L978 626.8L979 626.8L979 618.6L981 618.6L981 626.8L983 626.8L983 664.0L985 664.0L985 666.0L995 666.0L995 628.6L998 628.6L998 632.5L1002 632.5L1002 630.8L1004 630.8L1004 623.0L1007 623.0L1007 663.0L1009 663.0L1009 666.0L1047 666.0L1047 639.0L1049 639.0L1049 634.7L1051 634.7L1051 640.4L1053 640.4L1053 626.8L1055 626.8L1055 610.7L1057 610.7L1057 628.0L1060 628.0L1060 630.8L1061 630.8L1061 637.0L1063 637.0L1063 646.5L1065 646.5L1065 634.7L1067 634.7L1067 633.0L1070 633.0L1070 636.4L1071 636.4L1071 620.7L1073 620.7L1073 628.6L1075 628.6L1075 626.8L1077 626.8L1077 633.0L1080 633.0L1080 634.3L1082 634.3L1082 632.5L1084 632.5L1084 628.6L1087 628.6L1087 638.6L1089 638.6L1089 633.0L1091 633.0L1091 640.4L1093 640.4L1093 633.0L1095 633.0L1095 638.6L1097 638.6L1097 642.6L1099 642.6L1099 626.8L1101 626.8L1101 640.4L1103 640.4L1103 644.7L1105 644.7L1105 624.7L1111 624.7L1111 652.6L1113 652.6L1113 642.6L1115 642.6L1115 637.0L1117 637.0L1117 646.5L1119 646.5L1119 623.0L1121 623.0L1121 637.0L1123 637.0L1123 650.8L1125 650.8L1125 666.0L1131 666.0L1131 646.5L1133 646.5L1133 640.4L1135 640.4L1135 637.0L1138 637.0L1138 634.7L1141 634.7L1141 642.6L1143 642.6L1143 634.7L1145 634.7L1145 640.4L1147 640.4L1147 637.0L1149 637.0L1149 626.8L1153 626.8L1153 666.0L1155 666.0L1155 662.6L1157 662.6L1157 666.0L1187 666.0L1187 659.0L1189 659.0L1189 626.8L1193 626.8L1193 625.0L1195 625.0L1195 632.5L1197 632.5L1197 630.8L1199 630.8L1199 636.4L1203 636.4L1203 629.0L1205 629.0L1205 637.0L1207 637.0L1207 650.0L1209 650.0L1209 620.7L1211 620.7L1211 636.4L1213 636.4L1213 625.0L1217 625.0L1217 648.7L1219 648.7L1219 664.0L1221 664.0L1221 640.4L1224 640.4L1224 638.6L1227 638.6L1227 630.8L1229 630.8L1229 636.4L1231 636.4L1231 629.0L1233 629.0L1233 628.6L1237 628.6L1237 624.7L1239 624.7L1239 615.0L1241 615.0L1241 620.7L1244 620.7L1244 648.7L1247 648.7L1247 666.0L1269 666.0L1269 640.4L1275 640.4L1275 625.0L1277 625.0L1277 630.8L1279 630.8L1279 648.7L1281 648.7L1281 661.0L1283 661.0L1283 666.0L1289 666.0L1289 650.8L1291 650.8L1291 642.6L1293 642.6L1293 646.5L1295 646.5L1295 654.3L1297 654.3L1297 630.8L1299 630.8L1299 642.6L1301 642.6L1301 637.0L1303 637.0L1303 644.7L1305 644.7L1305 657.0L1306 657.0L1306 666.0L1309 666.0L1309 640.4L1311 640.4L1311 634.7L1313 634.7L1313 628.6L1318 628.6L1318 624.7L1323 624.7L1323 620.7L1326 620.7L1326 626.8L1329 626.8L1329 615.0L1330 615.0L1330 612.9L1333 612.9L1333 618.6L1335 618.6L1335 614.2L1340 614.2L1340 612.5L1343 612.5L1343 606.3L1345 606.3L1345 603.3L1347 603.3L1347 612.5L1349 612.5L1349 607.2L1352 607.2L1352 605.0L1354 605.0L1354 610.3L1357 610.3L1357 616.0L1358 616.0L1358 603.3L1361 603.3L1361 607.2L1363 607.2L1363 616.0L1366 616.0L1366 599.0L1369 599.0L1369 611.6L1372 611.6L1372 603.3L1374 603.3L1374 605.5L1377 605.5L1377 613.3L1380 613.3L1380 608.0L1385 608.0L1385 607.2L1387 607.2L1387 612.0L1390 612.0L1390 615.0L1392 615.0L1392 621.2L1396 621.2L1396 616.8L1398 616.8L1398 620.3L1404 620.3L1404 616.8L1407 616.8L1407 627.7L1409 627.7L1409 620.7L1411 620.7L1411 626.8L1414 626.8L1414 632.5L1418 632.5L1418 634.7L1420 634.7L1420 637.0L1423 637.0L1423 667Z" fill="#729cd0"/>
<rect x="466" y="666" width="957" height="2" fill="#729cd0"/>
<rect x="467.5" y="558" width="50.5" height="27" fill="#000" fill-opacity="0.5"/>
<rect x="468" y="633" width="51.5" height="28.5" fill="#000" fill-opacity="0.5"/>
<g shape-rendering="geometricPrecision"><rect x="484.9" y="526.9" width="22" height="20" fill="#6b6f73" stroke="#c2beb9" stroke-width="1.8"/>
<path d="M497.7 530.4Q494.6 529.8 493.7 533L490.1 542.2Q489.3 544.6 487.8 544.4M487.4 534.4H495.2M495.4 543.2L503.6 534.4M496.4 535.8L501.4 543" stroke="#151515" stroke-width="2.4" stroke-linecap="round" fill="none"/></g>
<g shape-rendering="geometricPrecision"><path d="M466 520H477.5L466 531.5Z" fill="#1a1f27"/><path d="M466 520H474.5L466 528.5Z" fill="#e6e8ec"/><path d="M1424.5 520H1412.5L1424.5 532Z" fill="#1a1f27"/><path d="M1424.5 520H1416.5L1424.5 528Z" fill="#e6e8ec"/></g>
<rect x="466" y="670" width="957" height="148" fill="#3a4d66"/>
<path d="M466 742L466 741.0L476 741.0L476 722.0L477 722.0L477 685.7L482 685.7L482 708.0L487 708.0L487 701.0L492 701.0L492 703.0L496 703.0L496 700.0L502 700.0L502 703.0L504 703.0L504 707.5L507 707.5L507 699.7L515 699.7L515 698.0L523 698.0L523 705.0L527 705.0L527 704.0L530 704.0L530 715.0L533 715.0L533 698.0L538 698.0L538 741.0L544 741.0L544 703.0L546 703.0L546 691.8L550 691.8L550 731.0L552 731.0L552 707.5L558 707.5L558 706.0L560 706.0L560 712.0L562 712.0L562 726.0L565 726.0L565 741.0L569 741.0L569 707.5L573 707.5L573 698.0L576 698.0L576 708.0L579 708.0L579 693.6L584 693.6L584 700.0L586 700.0L586 726.0L588 726.0L588 741.0L590 741.0L590 719.7L592 719.7L592 705.8L594 705.8L594 711.4L596 711.4L596 706.6L599 706.6L599 695.7L602 695.7L602 703.6L604 703.6L604 721.5L606 721.5L606 741.0L608 741.0L608 727.6L609 727.6L609 711.4L614 711.4L614 709.7L616 709.7L616 720.0L618 720.0L618 725.0L620 725.0L620 693.6L622 693.6L622 702.3L625 702.3L625 729.8L628 729.8L628 741.0L640 741.0L640 723.7L642 723.7L642 712.0L644 712.0L644 707.5L646 707.5L646 715.4L648 715.4L648 701.8L650 701.8L650 699.7L652 699.7L652 703.6L654 703.6L654 715.4L656 715.4L656 695.7L658 695.7L658 699.7L660 699.7L660 697.5L662 697.5L662 700.0L664 700.0L664 719.7L666 719.7L666 732.0L668 732.0L668 741.0L747 741.0L747 695.7L750 695.7L750 704.0L752 704.0L752 707.5L754 707.5L754 695.7L756 695.7L756 703.0L758 703.0L758 700.0L762 700.0L762 719.7L764 719.7L764 709.7L766 709.7L766 707.5L768 707.5L768 712.8L770 712.8L770 705.3L772 705.3L772 721.5L774 721.5L774 717.6L778 717.6L778 714.5L782 714.5L782 717.6L783 717.6L783 709.7L786 709.7L786 719.7L789 719.7L789 729.8L792 729.8L792 741.0L824 741.0L824 724.0L825 724.0L825 708.0L827 708.0L827 713.0L830 713.0L830 708.4L833 708.4L833 715.4L835 715.4L835 696.0L837 696.0L837 693.6L839 693.6L839 701.8L841 701.8L841 727.6L844 727.6L844 741.0L854 741.0L854 724.0L855 724.0L855 741.0L864 741.0L864 728.0L866 728.0L866 720.2L868 720.2L868 712.0L871 712.0L871 701.8L873 701.8L873 713.0L875 713.0L875 705.8L878 705.8L878 701.8L879 701.8L879 695.7L882 695.7L882 702.3L884 702.3L884 714.0L887 714.0L887 719.7L888 719.7L888 705.8L890 705.8L890 709.7L891 709.7L891 695.7L893 695.7L893 704.0L895 704.0L895 732.0L897 732.0L897 741.0L927 741.0L927 728.0L929 728.0L929 714.5L932 714.5L932 708.0L935 708.0L935 719.3L937 719.3L937 699.7L940 699.7L940 701.8L941 701.8L941 717.6L943 717.6L943 723.2L945 723.2L945 703.6L947 703.6L947 711.4L950 711.4L950 708.0L951 708.0L951 701.8L954 701.8L954 713.6L955 713.6L955 741.0L957 741.0L957 683.5L961 683.5L961 712.0L965 712.0L965 705.8L967 705.8L967 701.8L970 701.8L970 711.4L971 711.4L971 699.7L974 699.7L974 705.8L976 705.8L976 711.4L978 711.4L978 701.8L979 701.8L979 693.6L981 693.6L981 701.8L983 701.8L983 739.0L985 739.0L985 741.0L995 741.0L995 703.6L998 703.6L998 707.5L1002 707.5L1002 705.8L1004 705.8L1004 698.0L1007 698.0L1007 738.0L1009 738.0L1009 741.0L1047 741.0L1047 714.0L1049 714.0L1049 709.7L1051 709.7L1051 715.4L1053 715.4L1053 701.8L1055 701.8L1055 685.7L1057 685.7L1057 703.0L1060 703.0L1060 705.8L1061 705.8L1061 712.0L1063 712.0L1063 721.5L1065 721.5L1065 709.7L1067 709.7L1067 708.0L1070 708.0L1070 711.4L1071 711.4L1071 695.7L1073 695.7L1073 703.6L1075 703.6L1075 701.8L1077 701.8L1077 708.0L1080 708.0L1080 709.3L1082 709.3L1082 707.5L1084 707.5L1084 703.6L1087 703.6L1087 713.6L1089 713.6L1089 708.0L1091 708.0L1091 715.4L1093 715.4L1093 708.0L1095 708.0L1095 713.6L1097 713.6L1097 717.6L1099 717.6L1099 701.8L1101 701.8L1101 715.4L1103 715.4L1103 719.7L1105 719.7L1105 699.7L1111 699.7L1111 727.6L1113 727.6L1113 717.6L1115 717.6L1115 712.0L1117 712.0L1117 721.5L1119 721.5L1119 698.0L1121 698.0L1121 712.0L1123 712.0L1123 725.8L1125 725.8L1125 741.0L1131 741.0L1131 721.5L1133 721.5L1133 715.4L1135 715.4L1135 712.0L1138 712.0L1138 709.7L1141 709.7L1141 717.6L1143 717.6L1143 709.7L1145 709.7L1145 715.4L1147 715.4L1147 712.0L1149 712.0L1149 701.8L1153 701.8L1153 741.0L1155 741.0L1155 737.6L1157 737.6L1157 741.0L1187 741.0L1187 734.0L1189 734.0L1189 701.8L1193 701.8L1193 700.0L1195 700.0L1195 707.5L1197 707.5L1197 705.8L1199 705.8L1199 711.4L1203 711.4L1203 704.0L1205 704.0L1205 712.0L1207 712.0L1207 725.0L1209 725.0L1209 695.7L1211 695.7L1211 711.4L1213 711.4L1213 700.0L1217 700.0L1217 723.7L1219 723.7L1219 739.0L1221 739.0L1221 715.4L1224 715.4L1224 713.6L1227 713.6L1227 705.8L1229 705.8L1229 711.4L1231 711.4L1231 704.0L1233 704.0L1233 703.6L1237 703.6L1237 699.7L1239 699.7L1239 690.0L1241 690.0L1241 695.7L1244 695.7L1244 723.7L1247 723.7L1247 741.0L1269 741.0L1269 715.4L1275 715.4L1275 700.0L1277 700.0L1277 705.8L1279 705.8L1279 723.7L1281 723.7L1281 736.0L1283 736.0L1283 741.0L1289 741.0L1289 725.8L1291 725.8L1291 717.6L1293 717.6L1293 721.5L1295 721.5L1295 729.3L1297 729.3L1297 705.8L1299 705.8L1299 717.6L1301 717.6L1301 712.0L1303 712.0L1303 719.7L1305 719.7L1305 732.0L1306 732.0L1306 741.0L1309 741.0L1309 715.4L1311 715.4L1311 709.7L1313 709.7L1313 703.6L1318 703.6L1318 699.7L1323 699.7L1323 695.7L1326 695.7L1326 701.8L1329 701.8L1329 690.0L1330 690.0L1330 687.9L1333 687.9L1333 693.6L1335 693.6L1335 689.2L1340 689.2L1340 687.5L1343 687.5L1343 681.3L1345 681.3L1345 678.3L1347 678.3L1347 687.5L1349 687.5L1349 682.2L1352 682.2L1352 680.0L1354 680.0L1354 685.3L1357 685.3L1357 691.0L1358 691.0L1358 678.3L1361 678.3L1361 682.2L1363 682.2L1363 691.0L1366 691.0L1366 674.0L1369 674.0L1369 686.6L1372 686.6L1372 678.3L1374 678.3L1374 680.5L1377 680.5L1377 688.3L1380 688.3L1380 683.0L1385 683.0L1385 682.2L1387 682.2L1387 687.0L1390 687.0L1390 690.0L1392 690.0L1392 696.2L1396 696.2L1396 691.8L1398 691.8L1398 695.3L1404 695.3L1404 691.8L1407 691.8L1407 702.7L1409 702.7L1409 695.7L1411 695.7L1411 701.8L1414 701.8L1414 707.5L1418 707.5L1418 709.7L1420 709.7L1420 712.0L1423 712.0L1423 742Z" fill="#729cd0"/>
<rect x="466" y="741" width="957" height="1" fill="#729cd0"/>
<rect x="466" y="742" width="957" height="2" fill="#c6d2e2"/>
<rect x="466" y="744" width="957" height="1" fill="#a9a9a9"/>
<rect x="466" y="745" width="957" height="1" fill="#6e6e6e"/>
<rect x="466" y="746" width="957" height="1" fill="#1b2230"/><rect x="466" y="747" width="957" height="1" fill="#2b384a"/>
<path d="M466 817L466 816.0L476 816.0L476 797.0L477 797.0L477 760.7L482 760.7L482 783.0L487 783.0L487 776.0L492 776.0L492 778.0L496 778.0L496 775.0L502 775.0L502 778.0L504 778.0L504 782.5L507 782.5L507 774.7L515 774.7L515 773.0L523 773.0L523 780.0L527 780.0L527 779.0L530 779.0L530 790.0L533 790.0L533 773.0L538 773.0L538 816.0L544 816.0L544 778.0L546 778.0L546 766.8L550 766.8L550 806.0L552 806.0L552 782.5L558 782.5L558 781.0L560 781.0L560 787.0L562 787.0L562 801.0L565 801.0L565 816.0L569 816.0L569 782.5L573 782.5L573 773.0L576 773.0L576 783.0L579 783.0L579 768.6L584 768.6L584 775.0L586 775.0L586 801.0L588 801.0L588 816.0L590 816.0L590 794.7L592 794.7L592 780.8L594 780.8L594 786.4L596 786.4L596 781.6L599 781.6L599 770.7L602 770.7L602 778.6L604 778.6L604 796.5L606 796.5L606 816.0L608 816.0L608 802.6L609 802.6L609 786.4L614 786.4L614 784.7L616 784.7L616 795.0L618 795.0L618 800.0L620 800.0L620 768.6L622 768.6L622 777.3L625 777.3L625 804.8L628 804.8L628 816.0L640 816.0L640 798.7L642 798.7L642 787.0L644 787.0L644 782.5L646 782.5L646 790.4L648 790.4L648 776.8L650 776.8L650 774.7L652 774.7L652 778.6L654 778.6L654 790.4L656 790.4L656 770.7L658 770.7L658 774.7L660 774.7L660 772.5L662 772.5L662 775.0L664 775.0L664 794.7L666 794.7L666 807.0L668 807.0L668 816.0L747 816.0L747 770.7L750 770.7L750 779.0L752 779.0L752 782.5L754 782.5L754 770.7L756 770.7L756 778.0L758 778.0L758 775.0L762 775.0L762 794.7L764 794.7L764 784.7L766 784.7L766 782.5L768 782.5L768 787.8L770 787.8L770 780.3L772 780.3L772 796.5L774 796.5L774 792.6L778 792.6L778 789.5L782 789.5L782 792.6L783 792.6L783 784.7L786 784.7L786 794.7L789 794.7L789 804.8L792 804.8L792 816.0L824 816.0L824 799.0L825 799.0L825 783.0L827 783.0L827 788.0L830 788.0L830 783.4L833 783.4L833 790.4L835 790.4L835 771.0L837 771.0L837 768.6L839 768.6L839 776.8L841 776.8L841 802.6L844 802.6L844 816.0L854 816.0L854 799.0L855 799.0L855 816.0L864 816.0L864 803.0L866 803.0L866 795.2L868 795.2L868 787.0L871 787.0L871 776.8L873 776.8L873 788.0L875 788.0L875 780.8L878 780.8L878 776.8L879 776.8L879 770.7L882 770.7L882 777.3L884 777.3L884 789.0L887 789.0L887 794.7L888 794.7L888 780.8L890 780.8L890 784.7L891 784.7L891 770.7L893 770.7L893 779.0L895 779.0L895 807.0L897 807.0L897 816.0L927 816.0L927 803.0L929 803.0L929 789.5L932 789.5L932 783.0L935 783.0L935 794.3L937 794.3L937 774.7L940 774.7L940 776.8L941 776.8L941 792.6L943 792.6L943 798.2L945 798.2L945 778.6L947 778.6L947 786.4L950 786.4L950 783.0L951 783.0L951 776.8L954 776.8L954 788.6L955 788.6L955 816.0L957 816.0L957 758.5L961 758.5L961 787.0L965 787.0L965 780.8L967 780.8L967 776.8L970 776.8L970 786.4L971 786.4L971 774.7L974 774.7L974 780.8L976 780.8L976 786.4L978 786.4L978 776.8L979 776.8L979 768.6L981 768.6L981 776.8L983 776.8L983 814.0L985 814.0L985 816.0L995 816.0L995 778.6L998 778.6L998 782.5L1002 782.5L1002 780.8L1004 780.8L1004 773.0L1007 773.0L1007 813.0L1009 813.0L1009 816.0L1047 816.0L1047 789.0L1049 789.0L1049 784.7L1051 784.7L1051 790.4L1053 790.4L1053 776.8L1055 776.8L1055 760.7L1057 760.7L1057 778.0L1060 778.0L1060 780.8L1061 780.8L1061 787.0L1063 787.0L1063 796.5L1065 796.5L1065 784.7L1067 784.7L1067 783.0L1070 783.0L1070 786.4L1071 786.4L1071 770.7L1073 770.7L1073 778.6L1075 778.6L1075 776.8L1077 776.8L1077 783.0L1080 783.0L1080 784.3L1082 784.3L1082 782.5L1084 782.5L1084 778.6L1087 778.6L1087 788.6L1089 788.6L1089 783.0L1091 783.0L1091 790.4L1093 790.4L1093 783.0L1095 783.0L1095 788.6L1097 788.6L1097 792.6L1099 792.6L1099 776.8L1101 776.8L1101 790.4L1103 790.4L1103 794.7L1105 794.7L1105 774.7L1111 774.7L1111 802.6L1113 802.6L1113 792.6L1115 792.6L1115 787.0L1117 787.0L1117 796.5L1119 796.5L1119 773.0L1121 773.0L1121 787.0L1123 787.0L1123 800.8L1125 800.8L1125 816.0L1131 816.0L1131 796.5L1133 796.5L1133 790.4L1135 790.4L1135 787.0L1138 787.0L1138 784.7L1141 784.7L1141 792.6L1143 792.6L1143 784.7L1145 784.7L1145 790.4L1147 790.4L1147 787.0L1149 787.0L1149 776.8L1153 776.8L1153 816.0L1155 816.0L1155 812.6L1157 812.6L1157 816.0L1187 816.0L1187 809.0L1189 809.0L1189 776.8L1193 776.8L1193 775.0L1195 775.0L1195 782.5L1197 782.5L1197 780.8L1199 780.8L1199 786.4L1203 786.4L1203 779.0L1205 779.0L1205 787.0L1207 787.0L1207 800.0L1209 800.0L1209 770.7L1211 770.7L1211 786.4L1213 786.4L1213 775.0L1217 775.0L1217 798.7L1219 798.7L1219 814.0L1221 814.0L1221 790.4L1224 790.4L1224 788.6L1227 788.6L1227 780.8L1229 780.8L1229 786.4L1231 786.4L1231 779.0L1233 779.0L1233 778.6L1237 778.6L1237 774.7L1239 774.7L1239 765.0L1241 765.0L1241 770.7L1244 770.7L1244 798.7L1247 798.7L1247 816.0L1269 816.0L1269 790.4L1275 790.4L1275 775.0L1277 775.0L1277 780.8L1279 780.8L1279 798.7L1281 798.7L1281 811.0L1283 811.0L1283 816.0L1289 816.0L1289 800.8L1291 800.8L1291 792.6L1293 792.6L1293 796.5L1295 796.5L1295 804.3L1297 804.3L1297 780.8L1299 780.8L1299 792.6L1301 792.6L1301 787.0L1303 787.0L1303 794.7L1305 794.7L1305 807.0L1306 807.0L1306 816.0L1309 816.0L1309 790.4L1311 790.4L1311 784.7L1313 784.7L1313 778.6L1318 778.6L1318 774.7L1323 774.7L1323 770.7L1326 770.7L1326 776.8L1329 776.8L1329 765.0L1330 765.0L1330 762.9L1333 762.9L1333 768.6L1335 768.6L1335 764.2L1340 764.2L1340 762.5L1343 762.5L1343 756.3L1345 756.3L1345 753.3L1347 753.3L1347 762.5L1349 762.5L1349 757.2L1352 757.2L1352 755.0L1354 755.0L1354 760.3L1357 760.3L1357 766.0L1358 766.0L1358 753.3L1361 753.3L1361 757.2L1363 757.2L1363 766.0L1366 766.0L1366 749.0L1369 749.0L1369 761.6L1372 761.6L1372 753.3L1374 753.3L1374 755.5L1377 755.5L1377 763.3L1380 763.3L1380 758.0L1385 758.0L1385 757.2L1387 757.2L1387 762.0L1390 762.0L1390 765.0L1392 765.0L1392 771.2L1396 771.2L1396 766.8L1398 766.8L1398 770.3L1404 770.3L1404 766.8L1407 766.8L1407 777.7L1409 777.7L1409 770.7L1411 770.7L1411 776.8L1414 776.8L1414 782.5L1418 782.5L1418 784.7L1420 784.7L1420 787.0L1423 787.0L1423 817Z" fill="#729cd0"/>
<rect x="466" y="816" width="957" height="2" fill="#729cd0"/>
<rect x="467.5" y="708" width="50.5" height="27" fill="#000" fill-opacity="0.5"/>
<rect x="468" y="783" width="51.5" height="28.5" fill="#000" fill-opacity="0.5"/>
<g shape-rendering="geometricPrecision"><rect x="484.9" y="676.9" width="22" height="20" fill="#6b6f73" stroke="#c2beb9" stroke-width="1.8"/>
<path d="M497.7 680.4Q494.6 679.8 493.7 683L490.1 692.2Q489.3 694.6 487.8 694.4M487.4 684.4H495.2M495.4 693.2L503.6 684.4M496.4 685.8L501.4 693" stroke="#151515" stroke-width="2.4" stroke-linecap="round" fill="none"/></g>
<g shape-rendering="geometricPrecision"><path d="M466 670H477.5L466 681.5Z" fill="#1a1f27"/><path d="M466 670H474.5L466 678.5Z" fill="#e6e8ec"/><path d="M1424.5 670H1412.5L1424.5 682Z" fill="#1a1f27"/><path d="M1424.5 670H1416.5L1424.5 678Z" fill="#e6e8ec"/></g>
<rect x="466" y="668" width="957" height="2" fill="#2e2e2e"/>
<rect x="464" y="62" width="2" height="855" fill="#2d8ceb"/>
</svg>
<div style="position:absolute;left:463px;top:36px;width:1057px;height:24px;overflow:hidden"><div style="position:absolute;left:-53.7px;top:0px;font-size:23px;line-height:23px;letter-spacing:-0.8px;color:#b4b4b4;white-space:pre">00:00:00:00</div><div style="position:absolute;left:135.1px;top:0px;font-size:23px;line-height:23px;letter-spacing:-0.8px;color:#b4b4b4;white-space:pre">00:00:16:00</div><div style="position:absolute;left:323.9px;top:0px;font-size:23px;line-height:23px;letter-spacing:-0.8px;color:#b4b4b4;white-space:pre">00:00:32:00</div><div style="position:absolute;left:512.7px;top:0px;font-size:23px;line-height:23px;letter-spacing:-0.8px;color:#b4b4b4;white-space:pre">00:00:48:00</div><div style="position:absolute;left:701.5px;top:0px;font-size:23px;line-height:23px;letter-spacing:-0.8px;color:#b4b4b4;white-space:pre">00:01:04:00</div><div style="position:absolute;left:890.3px;top:0px;font-size:23px;line-height:23px;letter-spacing:-0.8px;color:#b4b4b4;white-space:pre">00:01:20:00</div></div>
<div style="position:absolute;left:138px;top:277px;font-size:19px;line-height:19px;color:#a2a6ab;white-space:pre;-webkit-text-stroke:0.25px #a2a6ab;">V3</div>
<div style="position:absolute;left:138px;top:327px;font-size:19px;line-height:19px;color:#a2a6ab;white-space:pre;-webkit-text-stroke:0.25px #a2a6ab;">V2</div>
<div style="position:absolute;left:138px;top:416.5px;font-size:19px;line-height:19px;color:#a9b9cc;white-space:pre;-webkit-text-stroke:0.25px #a9b9cc;">V1</div>
<div style="position:absolute;left:190px;top:425.8px;font-size:21.5px;line-height:21.5px;color:#a2a6ab;white-space:pre;-webkit-text-stroke:0.25px #a2a6ab;">Video 1</div>
<div style="position:absolute;left:138px;top:574.25px;font-size:19px;line-height:19px;color:#a9b9cc;white-space:pre;-webkit-text-stroke:0.25px #a9b9cc;">A1</div>
<div style="position:absolute;left:191px;top:584.25px;font-size:21.5px;line-height:21.5px;color:#a2a6ab;white-space:pre;-webkit-text-stroke:0.25px #a2a6ab;">Audio 1</div>
<div style="position:absolute;left:138px;top:724.25px;font-size:19px;line-height:19px;color:#a9b9cc;white-space:pre;-webkit-text-stroke:0.25px #a9b9cc;">A2</div>
<div style="position:absolute;left:191px;top:734.25px;font-size:21.5px;line-height:21.5px;color:#a2a6ab;white-space:pre;-webkit-text-stroke:0.25px #a2a6ab;">Audio 2</div>
<div style="position:absolute;left:138px;top:834.1px;font-size:19px;line-height:19px;color:#a9b9cc;white-space:pre;-webkit-text-stroke:0.25px #a9b9cc;">A3</div>
<div style="position:absolute;left:127px;top:883px;font-size:22.5px;line-height:22.5px;color:#a2a6ab;white-space:pre;-webkit-text-stroke:0.25px #a2a6ab;">Master</div>
<div style="position:absolute;left:279.5px;top:882.5px;font-size:23px;line-height:23px;color:#2d8ceb;white-space:pre;-webkit-text-stroke:0.25px #2d8ceb;letter-spacing:-2px">0.0</div>
<div style="position:absolute;left:521.5px;top:370px;font-size:18.5px;line-height:18.5px;color:#101010;white-space:pre;-webkit-text-stroke:0.25px #101010;-webkit-text-stroke:0.3px #101010">multiple_audio_tracks.mp4 [V]</div>
<div style="position:absolute;left:472.5px;top:565px;font-size:18.7px;line-height:18.7px;color:#c8c0b0;white-space:pre;-webkit-text-stroke:0.25px #c8c0b0;letter-spacing:-0.6px">L (1)</div>
<div style="position:absolute;left:472.5px;top:640px;font-size:18.7px;line-height:18.7px;color:#c8c0b0;white-space:pre;-webkit-text-stroke:0.25px #c8c0b0;letter-spacing:-0.6px">R (1)</div>
<div style="position:absolute;left:472.5px;top:715px;font-size:18.7px;line-height:18.7px;color:#c8c0b0;white-space:pre;-webkit-text-stroke:0.25px #c8c0b0;letter-spacing:-0.6px">L (2)</div>
<div style="position:absolute;left:472.5px;top:790px;font-size:18.7px;line-height:18.7px;color:#c8c0b0;white-space:pre;-webkit-text-stroke:0.25px #c8c0b0;letter-spacing:-0.6px">R (2)</div>
</body></html>
